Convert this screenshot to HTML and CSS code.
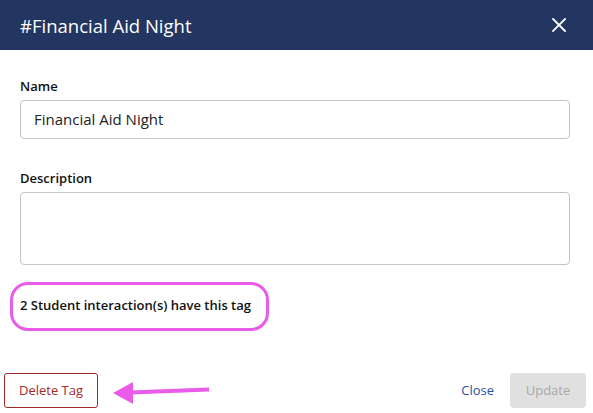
FILE: index.html
```html
<!DOCTYPE html>
<html>
<head>
<meta charset="utf-8">
<link rel="stylesheet" href="styles.css">
</head>
<body>
<div class="modal">
  <header class="header">
    <h1 class="title">#Financial Aid Night</h1>
    <svg class="close-x" width="14" height="14" viewBox="0 0 14 14"><path d="M1 1L13 13M13 1L1 13" stroke="#fff" stroke-width="1.8" stroke-linecap="square"/></svg>
  </header>
  <main class="content">
    <div class="field">
      <label class="label">Name</label>
      <div class="input">Financial Aid Night</div>
    </div>
    <div class="field field-desc">
      <label class="label">Description</label>
      <div class="textarea"></div>
    </div>
    <div class="count-wrap">
      <p class="count">2 Student interaction(s) have this tag</p>
      <div class="highlight"></div>
    </div>
  </main>
  <footer class="footer">
    <div class="left">
      <button class="btn-delete">Delete Tag</button>
      <svg class="arrow" width="100" height="24" viewBox="0 0 100 24"><path d="M96 8.5L18 11.5" stroke="#ea5bea" stroke-width="4"/><path d="M0 12L20 1L20 23Z" fill="#ea5bea"/></svg>
    </div>
    <div class="right">
      <a class="link-close">Close</a>
      <button class="btn-update">Update</button>
    </div>
  </footer>
</div>
</body>
</html>
```
FILE: styles.css
```css
* { box-sizing: border-box; }
body {
  margin: 0;
  font-family: "Open Sans", "Liberation Sans", sans-serif;
  background: #fff;
  color: #1a1a1a;
}
.modal { width: 593px; height: 413px; display: flex; flex-direction: column; }
.header {
  height: 50px;
  background: #233561;
  display: flex;
  align-items: center;
  justify-content: space-between;
  padding: 0 27px 0 20px;
}
.title {
  margin: 0;
  color: #fff;
  font-size: 18.5px;
  font-weight: 400;
}
.content { padding: 27px 23px 0 20px; }
.field { display: flex; flex-direction: column; }
.label {
  font-size: 13px;
  font-weight: 600;
  line-height: 18px;
  margin-bottom: 5px;
  color: #111;
}
.input {
  height: 39px;
  border: 1px solid #c4c4c4;
  border-radius: 4px;
  padding: 0 13px;
  font-size: 15px;
  line-height: 37px;
  color: #222;
}
.field-desc { margin-top: 30px; }
.textarea {
  height: 73px;
  border: 1px solid #c4c4c4;
  border-radius: 4px;
}
.count-wrap { position: relative; margin-top: 31px; }
.count {
  margin: 0;
  font-size: 13px;
  font-weight: 600;
  line-height: 18px;
  color: #111;
}
.highlight {
  position: absolute;
  left: -10px;
  top: -14px;
  width: 259px;
  height: 49px;
  border: 3px solid #e85ce8;
  border-radius: 18px;
}
.footer {
  margin-top: auto;
  height: 40px;
  margin-bottom: 3px;
  display: flex;
  align-items: center;
  justify-content: space-between;
  padding: 0 7px 0 4px;
}
.left { display: flex; align-items: center; }
.btn-delete {
  height: 35px;
  width: 94px;
  border: 1px solid #9e2a2a;
  border-radius: 3px;
  background: #fff;
  color: #a42a2a;
  font-family: inherit;
  font-size: 13px;
  padding: 0;
}
.arrow { margin-left: 15px; margin-top: 5px; }
.right { display: flex; align-items: center; }
.link-close {
  color: #2e4f9e;
  font-size: 13px;
  margin-right: 16px;
}
.btn-update {
  height: 35px;
  width: 76px;
  border: none;
  border-radius: 4px;
  background: #e0e0e0;
  color: #a8a8a8;
  font-family: inherit;
  font-size: 13px;
  padding: 0;
}
```
